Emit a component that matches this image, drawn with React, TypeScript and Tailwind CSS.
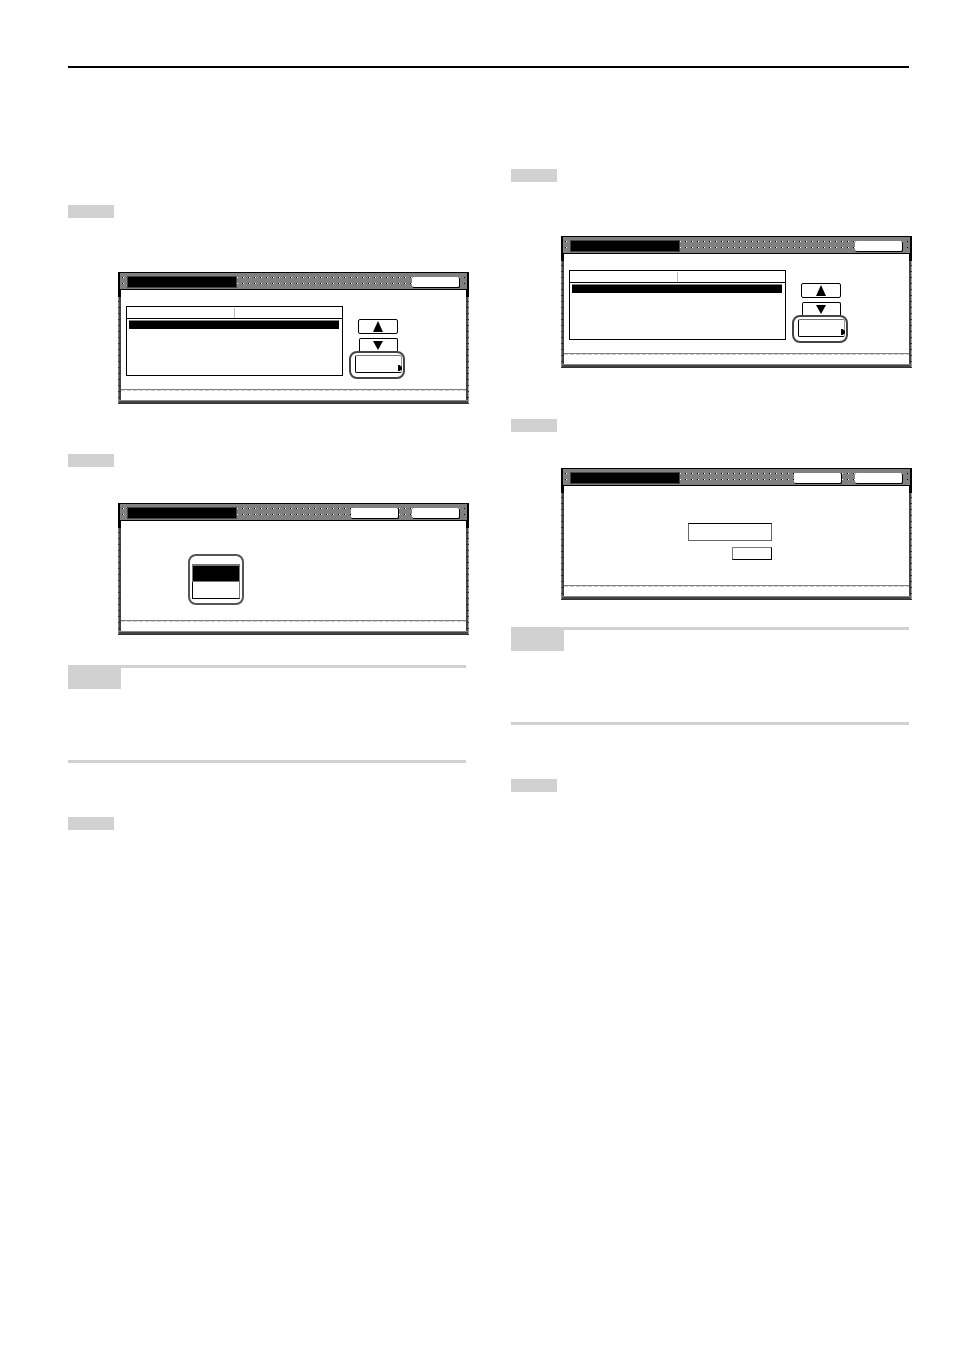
import type { ReactNode } from 'react';

function StepLabel({ className = '' }: { className?: string }) {
  return <div className={`h-[13px] w-[46px] bg-[#d1d1d1] ${className}`} />;
}

function Note({ className = '' }: { className?: string }) {
  return (
    <aside className={`h-[98px] border-y-[3px] border-[#d1d1d1] ${className}`}>
      <div className="h-[21px] w-[53px] bg-[#d1d1d1]" />
    </aside>
  );
}

function HeaderButton({ label }: { label: string }) {
  return (
    <button
      type="button"
      aria-label={label}
      className="h-[11px] w-12 rounded-xs border-r border-b border-black bg-white"
    />
  );
}

function Screen({ className, back = false, children }: { className: string; back?: boolean; children: ReactNode }) {
  return (
    <section
      className={`-mr-[3px] ml-[50px] flex h-[132px] flex-col bg-[#444] bg-[linear-gradient(to_bottom,#000_25px,transparent_25px),repeating-linear-gradient(to_bottom,transparent_0_5px,#333_5px_6px),linear-gradient(to_top,#aaa_1px,transparent_1px_3px,#888_3px_4px,transparent_4px),linear-gradient(to_right,#888_1px,transparent_1px_calc(100%-1px),#aaa_calc(100%-1px))] px-[3px] pb-1 ${className}`}
    >
      <header className="-mx-[3px] flex h-[18px] shrink-0 items-center border-x-2 border-y border-black bg-[#808080] px-[2px] pt-[2px]">
        {/* halftone strip behind the title and the header buttons */}
        <div className="flex h-3 min-w-0 flex-1 items-center gap-[13px] bg-[conic-gradient(at_1px_1px,transparent_270deg,#000_0),conic-gradient(at_2px_1px,transparent_270deg,#fff_0)] bg-size-[6px_6px] bg-position-[0_1px] px-[5px]">
          <div className="mr-auto h-3 w-[110px] border border-[#444] bg-black" />
          {back && <HeaderButton label="Back" />}
          <HeaderButton label="Close" />
        </div>
      </header>
      <div className="min-h-0 flex-1 bg-white">{children}</div>
      <footer className="h-[11px] shrink-0 border-t border-[#808080] bg-white">
        <div className="h-px bg-[repeating-linear-gradient(to_right,#ccc_0_4px,#fff_4px_6px)]" />
      </footer>
    </section>
  );
}

function ListScreen({ className }: { className: string }) {
  return (
    <Screen className={className}>
      <div className="flex gap-[6px] pt-4 pl-[5px]">
        <table className="h-[70px] w-[217px] table-fixed border-separate border-spacing-0 border border-black">
          <thead>
            <tr className="h-3">
              <th className="border-b border-black p-0">
                <div className="h-[10px] border-r border-[#bbb]" />
              </th>
              <th className="border-b border-black p-0" />
            </tr>
          </thead>
          <tbody>
            <tr>
              <td colSpan={2} className="p-0 pt-px pr-[3px] pl-[2px] align-top">
                <div className="h-[9px] border-t border-[#808080] bg-black" />
              </td>
            </tr>
          </tbody>
        </table>
        <div className="flex w-14 flex-col items-center pt-[13px]">
          <button
            type="button"
            aria-label="Up"
            className="ml-[2px] flex h-[15px] w-10 shrink-0 items-center justify-center rounded-xs border border-black"
          >
            <svg className="h-[11px] w-[10px]" viewBox="0 0 10 11" aria-hidden="true">
              <path d="M5 0 L10 11 H0 Z" />
            </svg>
          </button>
          <button
            type="button"
            aria-label="Down"
            className="mt-1 ml-[2px] flex h-[13px] w-[39px] shrink-0 items-center justify-center rounded-t-xs border border-b-0 border-black"
          >
            <svg className="h-[9px] w-[10px]" viewBox="0 0 10 9" aria-hidden="true">
              <path d="M0 0 H10 L5 9 Z" />
            </svg>
          </button>
          <div className="h-7 w-14 shrink-0 rounded-lg border-2 border-[#444] pt-[2px] pl-1">
            <button
              type="button"
              aria-label="Select"
              className="flex h-[18px] w-[47px] items-end justify-end rounded-xs border border-t-[#777] border-r-[#999] border-b-black border-l-black"
            >
              <svg className="-mr-px h-2 w-1" viewBox="0 0 4 8" aria-hidden="true">
                <path d="M0 1 H1.5 L4 3 V5.5 L1.5 7 H0 Z" />
              </svg>
            </button>
          </div>
        </div>
      </div>
    </Screen>
  );
}

function ChoiceScreen({ className }: { className: string }) {
  return (
    <Screen className={className} back>
      <div className="pt-[33px] pl-[67px]">
        <div className="flex h-[51px] w-14 flex-col items-center rounded-lg border-2 border-[#555] pt-2">
          <button
            type="button"
            aria-label="On"
            className="h-[18px] w-12 border border-t-2 border-[#777] bg-black"
          />
          <button type="button" aria-label="Off" className="h-[17px] w-12 border border-t-0 border-black border-r-[#777]" />
        </div>
      </div>
    </Screen>
  );
}

function EntryScreen({ className }: { className: string }) {
  return (
    <Screen className={className} back>
      <div className="flex w-[208px] flex-col items-end gap-[6px] pt-[37px]">
        <input
          type="text"
          aria-label="Value"
          className="h-[18px] w-[84px] border border-[#666] border-t-black"
        />
        <button
          type="button"
          aria-label="Enter"
          className="h-[13px] w-10 border border-[#777] border-r-black border-b-black"
        />
      </div>
    </Screen>
  );
}

export default function App() {
  return (
    <main className="bg-white pt-[66px] pr-[45px] pb-16 pl-[68px]">
      <hr className="border-0 border-t-2 border-black" />
      <div className="grid grid-cols-2 gap-[45px]">
        <div className="pt-[137px]">
          <StepLabel />
          <ListScreen className="mt-[54px]" />
          <StepLabel className="mt-[50px]" />
          <ChoiceScreen className="mt-9" />
          <Note className="mt-[30px]" />
          <StepLabel className="mt-[54px]" />
        </div>
        <div className="pt-[101px]">
          <StepLabel />
          <ListScreen className="mt-[54px]" />
          <StepLabel className="mt-[51px]" />
          <EntryScreen className="mt-9" />
          <Note className="mt-[27px]" />
          <StepLabel className="mt-[54px]" />
        </div>
      </div>
    </main>
  );
}
